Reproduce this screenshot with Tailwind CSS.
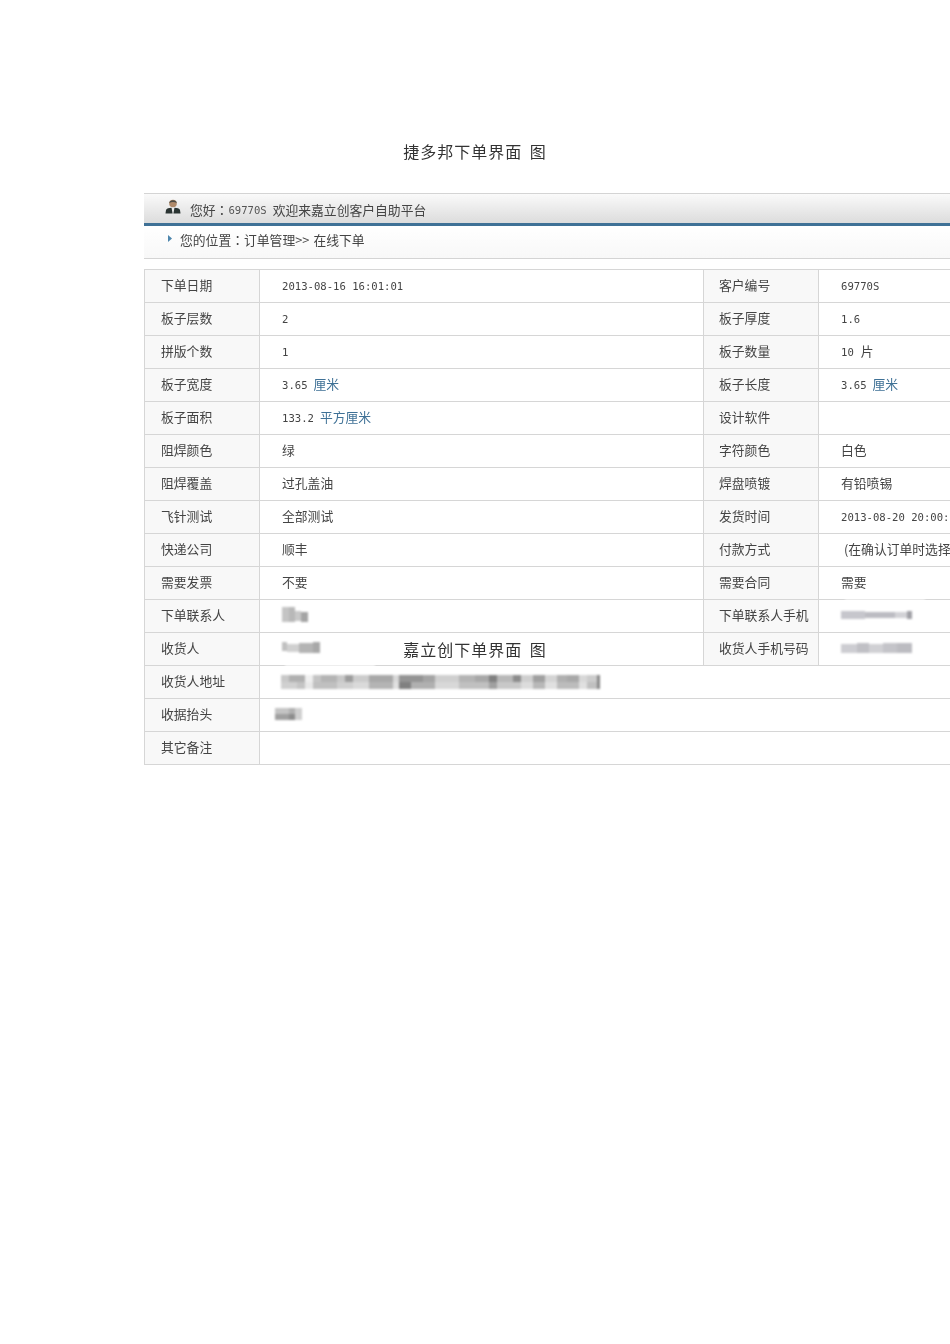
<!DOCTYPE html>
<html lang="zh-CN">
<head>
<meta charset="utf-8">
<title>下单界面</title>
<script src="https://cdn.jsdelivr.net/npm/@tailwindcss/browser@4"></script>
</head>
<body class="bg-white">
<div class="relative w-[950px] h-[1344px] overflow-hidden bg-white text-[12.8px] leading-none text-[#444] font-['Noto_Sans_CJK_SC',sans-serif]">
 <div class="blur-[0.35px]">
  <h1 class="h-[193px] pt-[142px] text-center text-[16px] leading-[18px] font-normal tracking-[1px] text-[#333] [word-spacing:3px]">捷多邦下单界面 图</h1>

  <div class="ml-[144px] w-[1000px]">
    <div class="h-[30px] flex items-center border-t border-[#d4d4d4] bg-gradient-to-b from-[#fafafa] to-[#dcdcdc] pl-[21px] pt-[3px]">
      <svg class="w-[16px] h-[16px] mr-[9px] -mt-[6px]" viewBox="0 0 16 16">
        <circle cx="8" cy="4.5" r="3.8" fill="#b08a6a"/>
        <path d="M4.2 4 C4.5 0.2 11.5 0.2 11.8 4 C9.5 2.6 6.5 2.6 4.2 4Z" fill="#4a4a44"/>
        <path d="M0.5 14.5 L1 11 C1.5 9.5 4 9 6.5 8.8 L7.6 14.5Z" fill="#2a3432"/>
        <path d="M15.5 14.5 L15 11 C14.5 9.5 12 9 9.5 8.8 L8.4 14.5Z" fill="#2a3432"/>
      </svg>
      <span lang="zh-TW" class="font-['Noto_Sans_CJK_TC',sans-serif]">您好：</span><span class="font-['DejaVu_Sans_Mono',monospace] text-[10.6px] text-[#555]">69770S</span><span class="ml-[6px]">欢迎来嘉立创客户自助平台</span>
    </div>
    <div class="h-[3px] bg-[#3f7196]"></div>
    <div class="h-[33px] flex items-center border-b border-[#d4d4d4] bg-gradient-to-b from-white to-[#f8f8f8] pl-[24px] pb-[3px]">
      <svg class="w-[4px] h-[7px] mr-[8px] -mt-[5px]" viewBox="0 0 4 7"><path d="M0 0 L4 3.5 L0 7Z" fill="#4d86ad"/></svg>
      <span lang="zh-TW" class="font-['Noto_Sans_CJK_TC',sans-serif]">您的位置：</span><span>订单管理&gt;&gt;</span><span class="ml-[4px]">在线下单</span>
    </div>

    <table class="mt-[10px] w-[1000px] table-fixed border-collapse whitespace-nowrap [&_td]:h-[33px] [&_td]:p-0 [&_td]:pb-[2px] [&_td]:border [&_td]:border-[#d6d6d6]">
      <colgroup>
        <col class="w-[115px]"><col class="w-[444px]"><col class="w-[115px]"><col>
      </colgroup>
      <tbody>
        <tr>
          <td class="bg-[#f8f8f8] pl-[16px]!">下单日期</td>
          <td class="pl-[22px]!"><span class="font-['DejaVu_Sans_Mono',monospace] text-[10.6px]">2013-08-16 16:01:01</span></td>
          <td class="bg-[#f8f8f8] pl-[15px]!">客户编号</td>
          <td class="pl-[22px]!"><span class="font-['DejaVu_Sans_Mono',monospace] text-[10.6px]">69770S</span></td>
        </tr>
        <tr>
          <td class="bg-[#f8f8f8] pl-[16px]!">板子层数</td>
          <td class="pl-[22px]!"><span class="font-['DejaVu_Sans_Mono',monospace] text-[10.6px]">2</span></td>
          <td class="bg-[#f8f8f8] pl-[15px]!">板子厚度</td>
          <td class="pl-[22px]!"><span class="font-['DejaVu_Sans_Mono',monospace] text-[10.6px]">1.6</span></td>
        </tr>
        <tr>
          <td class="bg-[#f8f8f8] pl-[16px]!">拼版个数</td>
          <td class="pl-[22px]!"><span class="font-['DejaVu_Sans_Mono',monospace] text-[10.6px]">1</span></td>
          <td class="bg-[#f8f8f8] pl-[15px]!">板子数量</td>
          <td class="pl-[22px]!"><span class="font-['DejaVu_Sans_Mono',monospace] text-[10.6px]">10</span><span class="ml-[7px]">片</span></td>
        </tr>
        <tr>
          <td class="bg-[#f8f8f8] pl-[16px]!">板子宽度</td>
          <td class="pl-[22px]!"><span class="font-['DejaVu_Sans_Mono',monospace] text-[10.6px]">3.65</span><span class="ml-[6px] text-[#3f7196]">厘米</span></td>
          <td class="bg-[#f8f8f8] pl-[15px]!">板子长度</td>
          <td class="pl-[22px]!"><span class="font-['DejaVu_Sans_Mono',monospace] text-[10.6px]">3.65</span><span class="ml-[6px] text-[#3f7196]">厘米</span></td>
        </tr>
        <tr>
          <td class="bg-[#f8f8f8] pl-[16px]!">板子面积</td>
          <td class="pl-[22px]!"><span class="font-['DejaVu_Sans_Mono',monospace] text-[10.6px]">133.2</span><span class="ml-[6px] text-[#3f7196]">平方厘米</span></td>
          <td class="bg-[#f8f8f8] pl-[15px]!">设计软件</td>
          <td></td>
        </tr>
        <tr>
          <td class="bg-[#f8f8f8] pl-[16px]!">阻焊颜色</td>
          <td class="pl-[22px]!">绿</td>
          <td class="bg-[#f8f8f8] pl-[15px]!">字符颜色</td>
          <td class="pl-[22px]!">白色</td>
        </tr>
        <tr>
          <td class="bg-[#f8f8f8] pl-[16px]!">阻焊覆盖</td>
          <td class="pl-[22px]!">过孔盖油</td>
          <td class="bg-[#f8f8f8] pl-[15px]!">焊盘喷镀</td>
          <td class="pl-[22px]!">有铅喷锡</td>
        </tr>
        <tr>
          <td class="bg-[#f8f8f8] pl-[16px]!">飞针测试</td>
          <td class="pl-[22px]!">全部测试</td>
          <td class="bg-[#f8f8f8] pl-[15px]!">发货时间</td>
          <td class="pl-[22px]!"><span class="font-['DejaVu_Sans_Mono',monospace] text-[10.6px]">2013-08-20 20:00:00</span></td>
        </tr>
        <tr>
          <td class="bg-[#f8f8f8] pl-[16px]!">快递公司</td>
          <td class="pl-[22px]!">顺丰</td>
          <td class="bg-[#f8f8f8] pl-[15px]!">付款方式</td>
          <td class="pl-[22px]!"><span class="ml-[3px]">(在确认订单时选择)</span></td>
        </tr>
        <tr>
          <td class="bg-[#f8f8f8] pl-[16px]!">需要发票</td>
          <td class="pl-[22px]!">不要</td>
          <td class="bg-[#f8f8f8] pl-[15px]!">需要合同</td>
          <td class="pl-[22px]!">需要</td>
        </tr>
        <tr>
          <td class="bg-[#f8f8f8] pl-[16px]!">下单联系人</td>
          <td class="pl-[22px]!">
            <svg class="w-[28px] h-[16px] blur-[0.8px]" viewBox="0 0 28 16">
              <rect x="0" y="0" width="7" height="15" fill="#c4c4c4"/><rect x="7" y="0" width="6" height="15" fill="#b8b8b8"/><rect x="13" y="4" width="6" height="10" fill="#c8c8c8"/><rect x="19" y="5" width="7" height="10" fill="#a4a4a4"/>
            </svg>
          </td>
          <td class="bg-[#f8f8f8] pl-[15px]!">下单联系人手机</td>
          <td class="pl-[22px]!">
            <svg class="w-[72px] h-[10px] blur-[0.8px]" viewBox="0 0 72 10">
              <rect x="0" y="1" width="24" height="8" fill="#c6c6cc"/><rect x="24" y="2" width="30" height="6" fill="#bcbcc2"/><rect x="54" y="2" width="12" height="6" fill="#d2d2d6"/><rect x="66" y="1" width="5" height="8" fill="#a0a0a6"/>
            </svg>
          </td>
        </tr>
        <tr>
          <td class="bg-[#f8f8f8] pl-[16px]!">收货人</td>
          <td class="pl-[22px]!">
            <svg class="w-[40px] h-[14px] blur-[0.8px]" viewBox="0 0 40 14">
              <rect x="0" y="1" width="5" height="9" fill="#c0c0c0"/><rect x="5" y="3" width="12" height="8" fill="#d0d0d0"/><rect x="17" y="2" width="14" height="10" fill="#b4b4b4"/><rect x="31" y="1" width="7" height="11" fill="#a8a8a8"/>
            </svg>
          </td>
          <td class="bg-[#f8f8f8] pl-[15px]!">收货人手机号码</td>
          <td class="pl-[22px]!">
            <svg class="w-[72px] h-[12px] blur-[0.8px]" viewBox="0 0 72 12">
              <rect x="0" y="2" width="16" height="9" fill="#cdcdd2"/><rect x="16" y="1" width="12" height="10" fill="#c0c0c5"/><rect x="28" y="2" width="14" height="9" fill="#d0d0d4"/><rect x="42" y="1" width="14" height="10" fill="#c4c4c9"/><rect x="56" y="1" width="15" height="10" fill="#bcbcc1"/>
            </svg>
          </td>
        </tr>
        <tr>
          <td class="bg-[#f8f8f8] pl-[16px]!">收货人地址</td>
          <td colspan="3" class="pl-[21px]!">
            <svg class="w-[324px] h-[16px] blur-[1.1px] translate-y-[1px]" viewBox="0 0 324 16">
              <rect x="0" y="1" width="8" height="7" fill="#c8c8c8"/><rect x="8" y="1" width="16" height="7" fill="#b0b0b0"/><rect x="24" y="1" width="8" height="7" fill="#f0f0f0"/><rect x="32" y="1" width="8" height="7" fill="#c4c4c4"/><rect x="40" y="1" width="16" height="7" fill="#b4b4b4"/><rect x="56" y="1" width="8" height="7" fill="#c8c8c8"/><rect x="64" y="1" width="8" height="7" fill="#9c9c9c"/><rect x="72" y="1" width="16" height="7" fill="#cccccc"/><rect x="88" y="1" width="24" height="7" fill="#a8a8a8"/><rect x="112" y="1" width="6" height="7" fill="#d8d8d8"/><rect x="118" y="1" width="24" height="7" fill="#949494"/><rect x="142" y="1" width="12" height="7" fill="#a4a4a4"/><rect x="154" y="1" width="24" height="7" fill="#cfcfcf"/><rect x="178" y="1" width="16" height="7" fill="#b4b4b4"/><rect x="194" y="1" width="14" height="7" fill="#a8a8a8"/><rect x="208" y="1" width="8" height="7" fill="#808080"/><rect x="216" y="1" width="16" height="7" fill="#b8b8b8"/><rect x="232" y="1" width="8" height="7" fill="#8c8c8c"/><rect x="240" y="1" width="12" height="7" fill="#cfcfcf"/><rect x="252" y="1" width="12" height="7" fill="#a0a0a0"/><rect x="264" y="1" width="12" height="7" fill="#d4d4d4"/><rect x="276" y="1" width="10" height="7" fill="#b0b0b0"/><rect x="286" y="1" width="12" height="7" fill="#a8a8a8"/><rect x="298" y="1" width="8" height="7" fill="#d8d8d8"/><rect x="306" y="1" width="10" height="7" fill="#cccccc"/><rect x="316" y="1" width="3" height="7" fill="#888"/>
              <rect x="0" y="8" width="16" height="7" fill="#d0d0d0"/><rect x="16" y="8" width="8" height="7" fill="#c4c4c4"/><rect x="24" y="8" width="8" height="7" fill="#e8e8e8"/><rect x="32" y="8" width="24" height="7" fill="#c0c0c0"/><rect x="56" y="8" width="16" height="7" fill="#d0d0d0"/><rect x="72" y="8" width="16" height="7" fill="#dadada"/><rect x="88" y="8" width="24" height="7" fill="#b4b4b4"/><rect x="112" y="8" width="6" height="7" fill="#e0e0e0"/><rect x="118" y="8" width="12" height="7" fill="#808080"/><rect x="130" y="8" width="24" height="7" fill="#b0b0b0"/><rect x="154" y="8" width="24" height="7" fill="#d8d8d8"/><rect x="178" y="8" width="30" height="7" fill="#c0c0c0"/><rect x="208" y="8" width="8" height="7" fill="#a0a0a0"/><rect x="216" y="8" width="24" height="7" fill="#c8c8c8"/><rect x="240" y="8" width="12" height="7" fill="#dcdcdc"/><rect x="252" y="8" width="12" height="7" fill="#b8b8b8"/><rect x="264" y="8" width="12" height="7" fill="#e0e0e0"/><rect x="276" y="8" width="22" height="7" fill="#bcbcbc"/><rect x="298" y="8" width="8" height="7" fill="#e0e0e0"/><rect x="306" y="8" width="10" height="7" fill="#c0c0c0"/><rect x="316" y="8" width="3" height="7" fill="#888"/>
            </svg>
          </td>
        </tr>
        <tr>
          <td class="bg-[#f8f8f8] pl-[16px]!">收据抬头</td>
          <td colspan="3" class="pl-[15px]!">
            <svg class="w-[28px] h-[15px] blur-[0.8px]" viewBox="0 0 28 15">
              <rect x="0" y="1" width="14" height="6" fill="#c4c4c4"/><rect x="14" y="1" width="6" height="6" fill="#b0b0b0"/><rect x="20" y="1" width="7" height="12" fill="#cfcfcf"/><rect x="0" y="7" width="14" height="6" fill="#a0a0a0"/><rect x="14" y="7" width="6" height="6" fill="#8c8c8c"/>
            </svg>
          </td>
        </tr>
        <tr>
          <td class="bg-[#f8f8f8] pl-[16px]!">其它备注</td>
          <td colspan="3"></td>
        </tr>
      </tbody>
    </table>
  </div>
 </div>

  <h2 class="absolute left-0 top-[640px] w-[950px] text-center text-[16px] leading-[18px] font-normal tracking-[1px] text-[#333] [word-spacing:3px] blur-[0.35px]">嘉立创下单界面 图</h2>
  <div class="absolute left-[285px] top-[664px] w-[90px] h-[3px] bg-white/70 blur-[1px]"></div>
  <div class="absolute left-[845px] top-[597px] w-[80px] h-[3px] bg-white/70 blur-[1px]"></div>
</div>
</body>
</html>
